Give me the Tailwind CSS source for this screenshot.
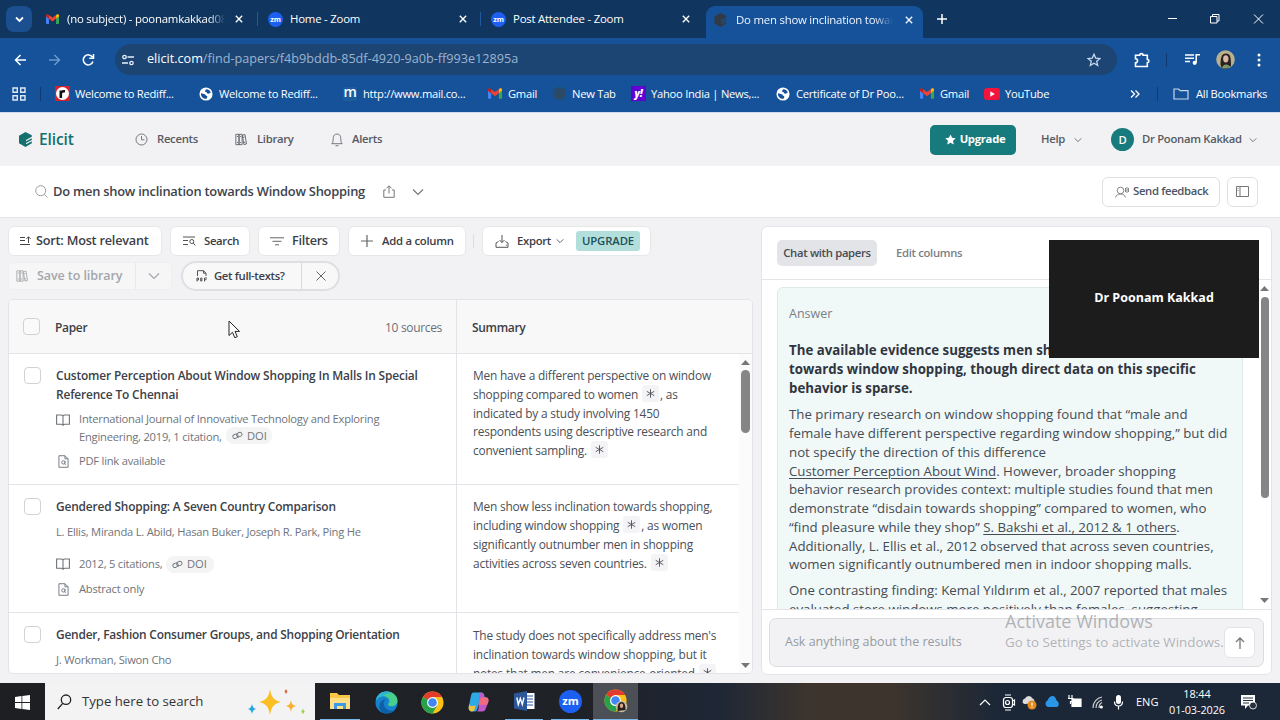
<!DOCTYPE html>
<html lang="en">
<head>
    <meta charset="UTF-8">
    <meta name="viewport" content="width=device-width, initial-scale=1.0">
    <title>Do men show inclination towards Window Shopping</title>
    <script src="https://cdn.jsdelivr.net/npm/@tailwindcss/browser@4"></script>
</head>
<body class="w-[1280px] h-[720px] overflow-hidden bg-[#f2f2f4] font-['Open_Sans','Noto_Sans',sans-serif] text-[#3b4048] whitespace-nowrap">

<!-- shared icons -->
<svg class="hidden">
    <symbol id="gmail" viewBox="0 0 16 12">
        <path d="M0 1.5V11a1 1 0 0 0 1 1h2.6V5z" fill="#4285f4"/>
        <path d="M16 1.5V11a1 1 0 0 1-1 1h-2.600V5z" fill="#34a853"/>
        <path d="M12.400 1.200V5.500L16 2.800V1.600C16 .2 14.400-.4 13.300.4z" fill="#fbbc04"/>
        <path d="M3.600 5.800V1L8 4.300 12.400 1v4.800L8 9z" fill="#ea4335"/>
        <path d="M0 1.600v1.400l3.600 2.800V1.200L2.700.4C1.600-.4 0 .2 0 1.600z" fill="#c5221f"/>
    </symbol>
    <symbol id="globe" viewBox="0 0 16 16">
        <circle cx="8" cy="8" r="7.500" fill="#fff"/>
        <path d="M8.500 2.500c2.500 0 4.500 2 5 4.200-1.500.5-2 1.300-3.500 1-1-.2-.8-1.700-2-1.900-1.300-.3-1.500-1-.8-1.800.6-.6.500-1 1.300-1.500zM2.300 7c1.700.3 3 .8 4.200 1.200 1.500.6 1 1.800 2.500 2.100 1 .3.500 1.800-.5 3.200C5 13.700 1.800 11 2.300 7z" fill="#15529a"/>
    </symbol>
    <symbol id="x" viewBox="0 0 10 10"><path d="M1 1l8 8M9 1l-8 8" fill="none" stroke="currentColor" stroke-width="1.700"/></symbol>
    <symbol id="chev" viewBox="0 0 12 8"><path d="M1 1.500l5 5 5-5" fill="none" stroke="currentColor" stroke-width="1.200"/></symbol>
    <symbol id="books" viewBox="0 0 14 14">
        <path d="M1 1h3.700v12H1zM4.700 1h3.600v12H4.700zM8.600 2l3-.8 1.800 11-3 .7zM2.200 3.500h1.300M6 3.500h1.200M2.200 10.500h1.300M6 10.500h1.200M9.400 4.500l1.700-.4M10.500 10.500l1.600-.4" fill="none" stroke="currentColor"/>
    </symbol>
    <symbol id="openbook" viewBox="0 0 14 12">
        <path d="M7 2v9M7 2C6.500 1.300 5.800 1 5 1H.6v9.300H5c.9 0 1.600.3 2 1 .4-.7 1.100-1 2-1h4.400V1H9c-.8 0-1.500.3-2 1z" fill="none" stroke="currentColor" stroke-width="1.100"/>
    </symbol>
    <symbol id="pdfdoc" viewBox="0 0 12 14">
        <path d="M1 .7h6.500L11 4v9.300H1zM7.500.7V4H11" fill="none" stroke="currentColor"/>
        <circle cx="5.800" cy="8" r="1.800" fill="none" stroke="currentColor"/><path d="M7.600 6v4.300h.8" fill="none" stroke="currentColor" stroke-width=".8"/>
    </symbol>
    <symbol id="link" viewBox="0 0 12 10">
        <rect x=".8" y="3.600" width="6" height="4.400" rx="2.200" transform="rotate(-25 3.800 5.800)" fill="none" stroke="currentColor"/>
        <rect x="5" y="1.800" width="6" height="4.400" rx="2.200" transform="rotate(-25 8 4)" fill="none" stroke="currentColor"/>
    </symbol>
    <symbol id="star6" viewBox="0 0 10 10"><path d="M5 .3v9.400M.8 2.600l8.400 4.800M9.200 2.600L.8 7.400" stroke="currentColor" fill="none"/></symbol>
    <symbol id="zm" viewBox="0 0 16 16">
        <circle cx="8" cy="8" r="8" fill="#1d5ff0"/>
        <text x="8" y="10.700" font-size="7.800" font-weight="700" text-anchor="middle" fill="#fff" font-family="Open Sans">zm</text>
    </symbol>
    <symbol id="elicit" viewBox="0 0 14 15">
        <path d="M7 0L13.300 3.300V4.800L7.500 8v1.300L13.300 6.300V8L7.500 11v1.200L13.300 9.300v2L7 15 .5 11.300V3.700z" fill="currentColor"/>
    </symbol>
    <symbol id="chrome" viewBox="0 0 24 24">
        <circle cx="12" cy="12" r="11.500" fill="#fbc116"/>
        <path d="M12 12L2.040 6.250A11.500 11.500 0 0 1 21.960 6.250H12z" fill="#e33b2e"/>
        <path d="M12 12L2.040 6.250A11.500 11.500 0 0 0 12 23.500L17 14.900z" fill="#27a24a"/>
        <circle cx="12" cy="12" r="5.700" fill="#fff"/><circle cx="12" cy="12" r="4.500" fill="#4285f4"/>
    </symbol>
</svg>

<!-- browser tabs -->
<div class="flex h-[38px] bg-[#10355e] text-white text-[11.400px] tracking-[-0.220px]">
    <div class="w-[38px] pt-[6px] pl-[6px]">
        <div class="w-[26px] h-[26px] rounded-[8px] bg-[#1b4f8f] flex items-center justify-center"><svg class="w-[9px] h-[7px]" viewBox="0 0 9 7"><path d="M1 1.500l3.500 3.500L8 1.500" fill="none" stroke="#fff" stroke-width="1.800"/></svg></div>
    </div>
    <div class="flex items-center w-[220px] pl-[8px] h-[38px]">
        <svg class="w-[13px] h-[10px] shrink-0"><use href="#gmail"/></svg>
        <span class="ml-[8px] w-[158px] overflow-hidden mask-r-from-90%">(no subject) - poonamkakkad08</span>
        <svg class="w-[8px] h-[8px] ml-[10px] shrink-0"><use href="#x"/></svg>
        <i class="w-px h-[14px] bg-[#24589a] ml-auto"></i>
    </div>
    <div class="flex items-center w-[223px] pl-[10px]">
        <svg class="w-[15px] h-[15px]"><use href="#zm"/></svg>
        <span class="ml-[7px] w-[169px]">Home - Zoom</span>
        <svg class="w-[8px] h-[8px] shrink-0"><use href="#x"/></svg>
        <i class="w-px h-[14px] bg-[#24589a] ml-auto"></i>
    </div>
    <div class="flex items-center w-[225px] pl-[10px]">
        <svg class="w-[15px] h-[15px]"><use href="#zm"/></svg>
        <span class="ml-[7px] w-[169px]">Post Attendee - Zoom</span>
        <svg class="w-[8px] h-[8px] shrink-0"><use href="#x"/></svg>
    </div>
    <div class="flex items-end">
        <div class="w-[217px] h-[32px] rounded-t-[9px] bg-[#15529a] flex items-center pl-[8px] pb-[5px] text-[#f0f5fc]">
            <svg class="w-[13px] h-[14px] text-[#333a45]"><use href="#elicit"/></svg>
            <span class="ml-[9px] w-[157px] overflow-hidden mask-r-from-88%">Do men show inclination towards</span>
            <svg class="w-[8px] h-[8px] ml-[12px]"><use href="#x"/></svg>
        </div>
    </div>
    <svg class="w-[10px] h-[10px] mt-[14px] ml-[14px]" viewBox="0 0 10 10"><path d="M5 0v10M0 5h10" stroke="#fff" stroke-width="1.500"/></svg>
    <svg class="w-[98px] h-[12px] mt-[13px] ml-[219px]" viewBox="0 0 98 12" fill="none" stroke="#fff">
        <path d="M2 5.500h9M88 1.500l9 9M97 1.500l-9 9"/><path d="M44.500 3.500h6.500v6.500h-6.500zM46.500 3.500v-2h6.500v6.500h-2"/>
    </svg>
</div>

<!-- address bar -->
<div class="flex items-center h-[43px] bg-[#15529a] text-white">
    <svg class="w-[82px] h-[14px] ml-[14px]" viewBox="0 0 82 14" fill="none" stroke="#fff" stroke-width="1.500">
        <path d="M12 7H2M6.500 2L1.500 7l5 5"/><path d="M35 7h10M40.500 2l5 5-5 5" stroke="#6c98cc"/>
        <path d="M78.500 4.200A5 5 0 1 0 79 8.500M79.500 1v4.200h-4.200"/>
    </svg>
    <div class="flex items-center ml-[19px] w-[1002px] h-[31px] rounded-full bg-[#1c4574] pl-[7px]">
        <svg class="w-[12px] h-[12px]" viewBox="0 0 12 12" fill="none" stroke="#e6eefa" stroke-width="1.300"><circle cx="2.500" cy="3" r="1.700"/><path d="M5.500 3H12M0 9h6"/><circle cx="9.500" cy="9" r="1.700"/></svg>
        <span class="ml-[13px] text-[12.630px] text-[#9db4d0]"><span class="text-white">elicit.com</span>/find-papers/f4b9bddb-85df-4920-9a0b-ff993e12895a</span>
        <svg class="w-[14px] h-[14px] ml-auto mr-[16px]" viewBox="0 0 14 14"><path d="M7 1.200l1.700 3.900 4.200.4-3.200 2.800 1 4.200L7 10.300l-3.700 2.200 1-4.200L1.100 5.500l4.200-.4z" fill="none" stroke="#c5d6ec" stroke-width="1.300"/></svg>
    </div>
    <svg class="w-[16px] h-[16px] ml-[17px]" viewBox="0 0 16 16"><path d="M1.500 3.300h4.200a1.700 1.700 0 0 1 3.400 0h4.200v4.200a1.600 1.600 0 0 1 0 3.200v3.800H1.500v-3.700a2 2 0 0 0 0-4z" fill="none" stroke="#fff" stroke-width="1.600"/></svg>
    <i class="w-px h-[14px] bg-[#0f3a74] ml-[16px]"></i>
    <svg class="w-[15px] h-[13px] ml-[18px]" viewBox="0 0 15 13"><path d="M0 2h9M0 5.200h9M0 8.400h5M11.200 9.500V1.700H15" fill="none" stroke="#fff" stroke-width="1.500"/><circle cx="9.700" cy="9.800" r="2.100" fill="#fff"/></svg>
    <svg class="w-[19px] h-[19px] ml-[16px]" viewBox="0 0 19 19"><circle cx="9.500" cy="9.500" r="9.300" fill="#b9b18e"/><path d="M4.500 15c0-7 1-11.500 5.500-11.500S15 8 15 16l-4 2.500H6z" fill="#2a211f"/><ellipse cx="9.800" cy="8.800" rx="2.700" ry="3.600" fill="#d9b8a8"/><path d="M6 18.500c.5-3 2-4 4-4s4 1.500 4.500 3z" fill="#7c9a6a"/></svg>
    <svg class="w-[4px] h-[14px] ml-[22px]" viewBox="0 0 4 14" fill="#fff"><circle cx="2" cy="2" r="1.500"/><circle cx="2" cy="7" r="1.500"/><circle cx="2" cy="12" r="1.500"/></svg>
</div>

<!-- bookmarks -->
<div class="flex items-center box-content h-[26px] pb-[5px] bg-[#15529a] text-white text-[11.200px] tracking-[-0.260px] pl-[12px] border-b border-[#cfdcef]">
    <svg class="w-[14px] h-[14px] shrink-0" viewBox="0 0 14 14"><path d="M1 1h4.300v4.300H1zM8.700 1H13v4.300H8.700zM1 8.700h4.300V13H1zM8.700 8.700H13V13H8.700z" fill="none" stroke="#dfe9f6" stroke-width="1.400"/></svg>
    <i class="w-px h-[14px] bg-[#0f3a74] ml-[14px] mr-[14px]"></i>
    <div class="flex items-center w-[144px] shrink-0">
        <svg class="w-[15px] h-[15px] mr-[5px]" viewBox="0 0 15 15"><rect width="15" height="15" fill="#d8202a"/><circle cx="7.500" cy="7.500" r="6.500" fill="#fff"/><path d="M5.800 12V4.500M5.800 7.500C6.300 5.500 7.500 5 10 5.300" stroke="#111" stroke-width="2.600" fill="none"/></svg>Welcome to Rediff...
    </div>
    <div class="flex items-center w-[144px] shrink-0"><svg class="w-[14px] h-[14px] mr-[6px]"><use href="#globe"/></svg>Welcome to Rediff...</div>
    <div class="flex items-center w-[145px] shrink-0"><span class="w-[14px] h-[14px] mr-[6px] text-[14px] leading-[9px] font-semibold bg-[#1a5c9e] flex justify-center">m</span>http://www.mail.co...</div>
    <div class="flex items-center w-[65px] shrink-0"><svg class="w-[14px] h-[11px] mr-[6px]"><use href="#gmail"/></svg>Gmail</div>
    <div class="flex items-center w-[78px] shrink-0"><i class="w-[13px] h-[13px] rounded-full bg-[#2b4a68] mr-[6px]"></i>New Tab</div>
    <div class="flex items-center w-[145px] shrink-0"><span class="w-[15px] h-[15px] mr-[5px] bg-[#6001d2] text-[10px] leading-[14px] font-extrabold italic text-center">y!</span>Yahoo India | News,...</div>
    <div class="flex items-center w-[144px] shrink-0"><svg class="w-[14px] h-[14px] mr-[6px]"><use href="#globe"/></svg>Certificate of Dr Poo...</div>
    <div class="flex items-center w-[64px] shrink-0"><svg class="w-[14px] h-[11px] mr-[6px]"><use href="#gmail"/></svg>Gmail</div>
    <div class="flex items-center w-[146px] shrink-0"><svg class="w-[16px] h-[12px] mr-[5px]" viewBox="0 0 16 12"><rect width="16" height="12" rx="3" fill="#f3143c"/><path d="M6.300 3.300v5.400L10.800 6z" fill="#fff"/></svg>YouTube</div>
    <svg class="w-[10px] h-[8px]" viewBox="0 0 10 8"><path d="M1 .5L4.500 4 1 7.500M5.500.5L9 4 5.500 7.500" fill="none" stroke="#fff" stroke-width="1.300"/></svg>
    <i class="w-px h-[14px] bg-[#0f3a74] ml-[17px] mr-[15px]"></i>
    <svg class="w-[16px] h-[12px] mr-[7px]" viewBox="0 0 16 12"><path d="M1 1h4.500l1.700 1.700H15V11H1z" fill="none" stroke="#c9d6e8" stroke-width="1.200"/></svg>All Bookmarks
</div>

<!-- app header -->
<header class="flex items-center h-[53px] text-[11.300px] tracking-[-0.300px] font-semibold text-[#565b63]">
    <svg class="w-[15px] h-[15px] ml-[18px] text-[#14706f]"><use href="#elicit"/></svg>
    <span class="ml-[6px] w-[96px] text-[15.500px] tracking-[-0.100px] font-semibold text-[#14706f]">Elicit</span>
    <svg class="w-[13px] h-[13px]" viewBox="0 0 13 13" fill="none" stroke="currentColor"><circle cx="6.500" cy="6.500" r="5.500" stroke-width=".8"/><path d="M6.500 3v3.800h3" stroke-width=".8"/></svg>
    <span class="ml-[9px] w-[78px]">Recents</span>
    <svg class="w-[12px] h-[13px]"><use href="#books"/></svg>
    <span class="ml-[10px] w-[74px]">Library</span>
    <svg class="w-[12px] h-[14px]" viewBox="0 0 12 14" fill="none" stroke="currentColor" stroke-width=".8"><path d="M.8 10.700h10.400C10 9.500 9.800 8 9.800 5.500 9.800 2.500 8.200 1 6 1S2.200 2.500 2.200 5.500C2.200 8 2 9.500.8 10.700zM4.500 12.700h3"/></svg>
    <span class="ml-[9px]">Alerts</span>
    <div class="ml-auto w-[86px] h-[30px] rounded-[5px] bg-[#177a7c] text-white font-bold flex items-center justify-center pl-[4px]">
        <svg class="w-[11px] h-[11px] mr-[4px]" viewBox="0 0 14 14"><path d="M7 .5l2 4.400 4.700.5-3.500 3.200 1 4.800L7 11l-4.200 2.400 1-4.800L.3 5.400 5 4.900z" fill="#fff"/></svg>Upgrade
    </div>
    <span class="ml-[25px] w-[33px]">Help</span>
    <svg class="w-[8px] h-[6px]"><use href="#chev"/></svg>
    <span class="ml-[29px] w-[23px] h-[23px] rounded-full bg-[#177a7c] text-white text-center leading-[23px]">D</span>
    <span class="ml-[8px] w-[107px]">Dr Poonam Kakkad</span>
    <svg class="w-[8px] h-[6px] mr-[23px]"><use href="#chev"/></svg>
</header>

<!-- question title -->
<div class="flex items-center h-[52px] bg-white border-b border-[#e3e4e7] text-[#4b5563]">
    <svg class="w-[13px] h-[13px] ml-[35px]" viewBox="0 0 13 13" fill="none" stroke="#9a9da3"><circle cx="5.700" cy="5.700" r="5"/><path d="M9.300 9.300l3.200 3.200"/></svg>
    <h1 class="ml-[5px] w-[330px] text-[12.900px] tracking-[-0.240px] font-semibold text-[#3d434c]">Do men show inclination towards Window Shopping</h1>
    <svg class="w-[12px] h-[13px]" viewBox="0 0 12 13" fill="none" stroke="#777"><path d="M3 5H.8v7.300h10.400V5H9M6 8.500V1M3.500 3.300L6 .8l2.500 2.500"/></svg>
    <svg class="w-[12px] h-[8px] ml-[17px] text-[#777]"><use href="#chev"/></svg>
    <div class="ml-auto w-[118px] h-[30px] rounded-[6px] border border-[#dfe0e3] flex items-center pl-[12px] text-[11.300px] tracking-[-0.330px] font-semibold">
        <svg class="w-[14px] h-[12px] mr-[4px]" viewBox="0 0 14 12" fill="none" stroke="#777" stroke-width=".9"><circle cx="5.500" cy="4.500" r="3.300"/><path d="M.6 11.500C1 9 3 8 5.500 8s4.500 1 4.900 3.500M10.500 2v4M12 1v6M13.500 2v4"/></svg>Send feedback
    </div>
    <div class="ml-[7px] mr-[22px] w-[31px] h-[30px] rounded-[6px] border border-[#dfe0e3] flex items-center justify-center">
        <svg class="w-[13px] h-[11px]" viewBox="0 0 13 11" fill="none" stroke="#777"><path d="M.5.500h12v10H.5zM4 .5v10M1.500 2.500h1M1.500 4.500h1"/></svg>
    </div>
</div>

<main class="flex h-[465px] pt-[8px] pl-[8px] pr-[8px] pb-[8px]">
    <!-- papers -->
    <section class="w-[745px] flex flex-col">
        <div class="flex h-[30px] text-[11.300px] tracking-[-0.300px] font-semibold">
            <div class="w-[154px] rounded-[6px] border border-[#e6e7e9] bg-white flex items-center pl-[11px] text-[12.700px] tracking-[-0.220px]">
                <svg class="w-[11px] h-[10px] mr-[5px]" viewBox="0 0 11 10" fill="none" stroke="#444"><path d="M0 1.500h5M0 4.500h5M0 8.500h10M8.500 7V.8M6.500 2.800l2-2 2 2"/></svg>Sort: Most relevant
            </div>
            <div class="ml-[8px] w-[80px] rounded-[6px] border border-[#e6e7e9] bg-white flex items-center pl-[12px]">
                <svg class="w-[13px] h-[10px] mr-[8px]" viewBox="0 0 13 10" fill="none" stroke="#555"><path d="M0 1h12M0 4.500h5M0 8.500h5"/><circle cx="8.800" cy="5.500" r="2"/><path d="M10.300 7l2 2.500"/></svg>Search
            </div>
            <div class="ml-[8px] w-[82px] rounded-[6px] border border-[#e6e7e9] bg-white flex items-center pl-[11px] text-[12.700px]">
                <svg class="w-[14px] h-[9px] mr-[8px]" viewBox="0 0 14 9" fill="none" stroke="#666"><path d="M0 .8h14M2.500 4.300h9M5 7.800h4"/></svg>Filters
            </div>
            <div class="ml-[8px] w-[118px] rounded-[6px] border border-[#e6e7e9] bg-white flex items-center pl-[12px] tracking-[-0.260px]">
                <svg class="w-[12px] h-[12px] mr-[9px]" viewBox="0 0 12 12"><path d="M6 0v12M0 6h12" stroke="#666" stroke-width="1.200"/></svg>Add a column
            </div>
            <i class="w-px h-[14px] mt-[8px] bg-[#dddee2] ml-[7px]"></i>
            <div class="ml-[8px] w-[169px] rounded-[6px] border border-[#e6e7e9] bg-white flex items-center pl-[12px]">
                <svg class="w-[14px] h-[13px] mr-[8px]" viewBox="0 0 14 13" fill="none" stroke="#555"><path d="M7 0v7.500M4.500 5L7 7.500 9.500 5M3.500 6.500L1 8v4.300h12V8l-2.500-1.500M11 10.300h.9"/></svg>
                <span class="w-[39px]">Export</span>
                <svg class="w-[8px] h-[6px]"><use href="#chev"/></svg>
                <span class="ml-[12px] w-[64px] h-[20px] rounded-[3px] bg-[#b2dfdc] text-[#1d4f57] text-center leading-[20px] tracking-[-0.100px]">UPGRADE</span>
            </div>
        </div>
        <div class="flex h-[30px] mt-[5px]">
            <div class="w-[164px] h-[28px] mt-px rounded-[4px] bg-[#f6f6f7] border border-[#eeeff1] flex items-center pl-[7px] text-[12.500px] tracking-[-0.080px] font-semibold text-[#a3a6ab]">
                <svg class="w-[12px] h-[12px] mr-[9px]"><use href="#books"/></svg>
                <span class="w-[98px]">Save to library</span>
                <i class="w-px h-full bg-[#e8e9eb]"></i>
                <svg class="w-[12px] h-[8px] ml-[12px]"><use href="#chev"/></svg>
            </div>
            <div class="ml-[9px] w-[159px] rounded-full border-2 border-[#dedfe2] bg-[#f8f8f9] flex items-center pl-[13px] text-[11.300px] tracking-[-0.330px] font-semibold">
                <svg class="w-[12px] h-[12px] mr-[6px]" viewBox="0 0 12 12" fill="none" stroke="#555"><path d="M1.500 6V.7h6L10 3.200V6M7.500.7v2.500H10M1 11.500V8h1.500v2H1M4.700 8v3h1.200V8zM8.500 11.500V8H11M8.500 9.700h2"/></svg>
                <span class="w-[87px]">Get full-texts?</span>
                <i class="w-px h-full bg-[#d9dadd]"></i>
                <svg class="w-[10px] h-[10px] ml-[14px]" viewBox="0 0 10 10"><path d="M.5.500l9 9M9.500.500l-9 9" stroke="#666"/></svg>
            </div>
        </div>

        <div class="mt-[8px] h-[375px] shrink-0 rounded-[5px] border border-[#e3e4e7] bg-white overflow-hidden">
            <div class="flex h-[54px] bg-[#f8f8f9] border-b-[1.500px] border-[#e3e4e7] text-[12px] tracking-[-0.330px]">
                <div class="w-[448px] border-r border-[#e3e4e7] flex items-center">
                    <i class="ml-[14px] w-[17px] h-[17px] rounded-[4px] border border-[#d0d2d6] bg-[#fafafa]"></i>
                    <span class="ml-[15px] pt-[2px] font-semibold">Paper</span>
                    <span class="ml-auto mr-[14px] pt-[2px] text-[#6b7078]">10 sources</span>
                </div>
                <span class="ml-[15px] leading-[56px] font-semibold">Summary</span>
            </div>
            <div class="flex h-[320px]">
                <div class="w-[730px] h-[320px] overflow-hidden text-[11.900px] tracking-[-0.190px] text-[#4b4f57]">
                    <div class="flex h-[131px] border-b border-[#e3e4e7]">
                        <div class="w-[448px] border-r border-[#e3e4e7] flex">
                            <i class="ml-[15px] mt-[13px] w-[17px] h-[17px] rounded-[4px] border border-[#d0d2d6]"></i>
                            <div class="ml-[15px] pt-[12px] text-[#6f747b] text-[11.200px] tracking-[-0.240px]">
                                <h2 class="text-[11.900px] tracking-[-0.150px] leading-[19px] font-semibold text-[#3b4048]">Customer Perception About Window Shopping In Malls In Special<br>Reference To Chennai</h2>
                                <div class="flex mt-[6px] leading-[18px]">
                                    <svg class="w-[14px] h-[12px] mt-[4px] mr-[9px]"><use href="#openbook"/></svg>
                                    <div>International Journal of Innovative Technology and Exploring<br>
                                        <div class="flex h-[18px]"><span class="w-[147px]">Engineering, 2019, 1 citation,</span><span class="w-[46px] h-[17px] -mt-px rounded-[8px] bg-[#f4f4f5] flex items-center pl-[6px] tracking-normal"><svg class="w-[11px] h-[9px] mr-[4px]"><use href="#link"/></svg>DOI</span></div>
                                    </div>
                                </div>
                                <div class="flex items-center mt-[6px] leading-[18px]"><svg class="w-[11px] h-[13px] ml-[2px] mr-[10px]"><use href="#pdfdoc"/></svg>PDF link available</div>
                            </div>
                        </div>
                        <div class="pl-[16px] pt-[12px] leading-[18.800px]">
                            <p>Men have a different perspective on window</p>
                            <p class="flex">shopping compared to women<span class="ml-[4px] mr-px w-[17px] h-[17px] rounded-[3px] bg-[#f4f4f6] flex items-center justify-center"><svg class="w-[9px] h-[9px]"><use href="#star6"/></svg></span>, as</p>
                            <p>indicated by a study involving 1450</p>
                            <p>respondents using descriptive research and</p>
                            <p class="flex">convenient sampling.<span class="ml-[4px] w-[17px] h-[17px] rounded-[3px] bg-[#f4f4f6] flex items-center justify-center"><svg class="w-[9px] h-[9px]"><use href="#star6"/></svg></span></p>
                        </div>
                    </div>
                    <div class="flex h-[128px] border-b border-[#e3e4e7]">
                        <div class="w-[448px] border-r border-[#e3e4e7] flex">
                            <i class="ml-[15px] mt-[13px] w-[17px] h-[17px] rounded-[4px] border border-[#d0d2d6]"></i>
                            <div class="ml-[15px] pt-[12px] text-[#6f747b] text-[11.200px] tracking-[-0.240px] leading-[18px]">
                                <h2 class="text-[11.900px] tracking-[-0.150px] leading-[19px] font-semibold text-[#3b4048]">Gendered Shopping: A Seven Country Comparison</h2>
                                <p class="mt-[7px]">L. Ellis, Miranda L. Abild, Hasan Buker, Joseph R. Park, Ping He</p>
                                <div class="flex items-center mt-[14px]">
                                    <svg class="w-[14px] h-[12px] mr-[9px]"><use href="#openbook"/></svg>
                                    <span class="w-[87px]">2012, 5 citations,</span><span class="w-[48px] h-[17px] rounded-[8px] bg-[#f4f4f5] flex items-center pl-[6px] tracking-normal"><svg class="w-[11px] h-[9px] mr-[4px]"><use href="#link"/></svg>DOI</span>
                                </div>
                                <div class="flex items-center mt-[7px]"><svg class="w-[11px] h-[13px] ml-[2px] mr-[10px]"><use href="#pdfdoc"/></svg>Abstract only</div>
                            </div>
                        </div>
                        <div class="pl-[16px] pt-[12px] leading-[19px]">
                            <p>Men show less inclination towards shopping,</p>
                            <p class="flex">including window shopping<span class="ml-[4px] mr-px w-[17px] h-[17px] rounded-[3px] bg-[#f4f4f6] flex items-center justify-center"><svg class="w-[9px] h-[9px]"><use href="#star6"/></svg></span>, as women</p>
                            <p>significantly outnumber men in shopping</p>
                            <p class="flex">activities across seven countries.<span class="ml-[4px] w-[17px] h-[17px] rounded-[3px] bg-[#f4f4f6] flex items-center justify-center"><svg class="w-[9px] h-[9px]"><use href="#star6"/></svg></span></p>
                        </div>
                    </div>
                    <div class="flex h-[128px]">
                        <div class="w-[448px] border-r border-[#e3e4e7] flex">
                            <i class="ml-[15px] mt-[13px] w-[17px] h-[17px] rounded-[4px] border border-[#d0d2d6]"></i>
                            <div class="ml-[15px] pt-[12px] text-[#6f747b] text-[11.200px] tracking-[-0.240px] leading-[18px]">
                                <h2 class="text-[11.900px] tracking-[-0.200px] leading-[19px] font-semibold text-[#3b4048]">Gender, Fashion Consumer Groups, and Shopping Orientation</h2>
                                <p class="mt-[7px]">J. Workman, Siwon Cho</p>
                            </div>
                        </div>
                        <div class="pl-[16px] pt-[13px] leading-[18.800px]">
                            <p>The study does not specifically address men's</p>
                            <p>inclination towards window shopping, but it</p>
                            <p class="flex">notes that men are convenience-oriented<span class="ml-[4px] w-[17px] h-[17px] rounded-[3px] bg-[#f4f4f6] flex items-center justify-center"><svg class="w-[9px] h-[9px]"><use href="#star6"/></svg></span></p>
                        </div>
                    </div>
                </div>
                <div class="w-[13px] bg-[#fbfbfb] flex flex-col items-center pt-[6px]">
                    <svg class="w-[9px] h-[5px]" viewBox="0 0 9 5"><path d="M0 5l4.500-5L9 5z" fill="#777"/></svg>
                    <i class="mt-[5px] w-[9px] h-[63px] rounded-full bg-[#858585]"></i>
                    <svg class="w-[9px] h-[5px] mt-auto mb-[6px]" viewBox="0 0 9 5"><path d="M0 0l4.500 5L9 0z" fill="#777"/></svg>
                </div>
            </div>
        </div>
    </section>

    <!-- chat -->
    <aside class="ml-[8px] w-[511px] h-[449px] shrink-0 rounded-[6px] border border-[#e3e4e7] bg-white flex flex-col">
        <div class="h-[53px] shrink-0 border-b border-[#e3e4e7] flex items-center text-[11.300px] tracking-[-0.330px] font-semibold text-[#474c54]">
            <span class="ml-[15px] w-[100px] h-[26px] rounded-[5px] bg-[#e3e4e7] text-center leading-[26px]">Chat with papers</span>
            <span class="ml-[19px] text-[#7a7f86]">Edit columns</span>
        </div>
        <div class="flex h-[329px] shrink-0 overflow-hidden">
            <div class="ml-[15px] mt-[7px] w-[466px] h-[400px] shrink-0 rounded-[6px] border border-[#deebea] bg-[#f0f8f8] pl-[11px] pt-[16px] text-[13.280px] leading-[18.750px] text-[#454c55]">
                <div class="text-[12.500px] leading-[20px] text-[#7a7f86]">Answer</div>
                <div class="mt-[17px] font-bold text-[13.280px] text-[#30363f]">
                    <p>The available evidence suggests men show less inclination</p>
                    <p>towards window shopping, though direct data on this specific</p>
                    <p>behavior is sparse.</p>
                </div>
                <div class="mt-[8px]">
                    <p>The primary research on window shopping found that “male and</p>
                    <p>female have different perspective regarding window shopping,” but did</p>
                    <p>not specify the direction of this difference</p>
                    <p><span class="underline underline-offset-2">Customer Perception About Wind</span>. However, broader shopping</p>
                    <p>behavior research provides context: multiple studies found that men</p>
                    <p>demonstrate “disdain towards shopping” compared to women, who</p>
                    <p>“find pleasure while they shop” <span class="underline underline-offset-2">S. Bakshi et al., 2012 &amp; 1 others</span>.</p>
                    <p>Additionally, L. Ellis et al., 2012 observed that across seven countries,</p>
                    <p>women significantly outnumbered men in indoor shopping malls.</p>
                </div>
                <div class="mt-[7px]">
                    <p>One contrasting finding: Kemal Yıldırım et al., 2007 reported that males</p>
                    <p>evaluated store windows more positively than females, suggesting</p>
                </div>
            </div>
            <div class="ml-auto w-[13px] flex flex-col items-center pt-[6px]">
                <svg class="w-[9px] h-[5px]" viewBox="0 0 9 5"><path d="M0 5l4.500-5L9 5z" fill="#777"/></svg>
                <i class="mt-[6px] w-[8px] h-[201px] rounded-full bg-[#858585]"></i>
                <svg class="w-[9px] h-[5px] mt-auto mb-[6px]" viewBox="0 0 9 5"><path d="M0 0l4.500 5L9 0z" fill="#777"/></svg>
            </div>
        </div>
        <div class="flex-1 border-t border-[#e3e4e7] pl-[7px] pt-[8px]">
            <div class="w-[495px] h-[49px] rounded-[7px] border-[1.500px] border-[#dcdde0] bg-[#f2f2f4] flex items-center pl-[15px] pr-[8px] text-[12.500px] text-[#969ba2]">
                Ask anything about the results
                <span class="ml-auto w-[31px] h-[31px] rounded-[6px] border border-[#e3e4e7] bg-white flex items-center justify-center"><svg class="w-[10px] h-[12px]" viewBox="0 0 10 12" fill="none" stroke="#777" stroke-width="1.300"><path d="M5 12V1M1 5l4-4 4 4"/></svg></span>
            </div>
        </div>
    </aside>
</main>

<!-- taskbar -->
<footer class="flex h-[38px] bg-[linear-gradient(90deg,#1e1f22_0,#1f2227_45%,#1e2736_56%,#3c342d_63%,#3c342d_70%,#1b2737_78%,#1c2838_100%)] text-white">
    <div class="w-[45px] flex items-center justify-center"><svg class="w-[15px] h-[15px]" viewBox="0 0 15 15"><path d="M0 2l6.500-1v6H0zM7.300.9L15 0v7H7.300zM0 8h6.500v6L0 13zM7.300 8H15v7l-7.700-1z" fill="#fff"/></svg></div>
    <div class="w-[270px] bg-[#f3f3f3] flex items-center pl-[12px] text-[13.200px] text-[#333]">
        <svg class="w-[15px] h-[16px] mr-[10px]" viewBox="0 0 15 16" fill="none" stroke="#222" stroke-width="1.300"><circle cx="9" cy="5.700" r="4.700"/><path d="M5.700 9.300L.8 15"/></svg>
        <span>Type here to search</span>
        <svg class="w-[58px] h-[26px] ml-auto mr-[9px]" viewBox="0 0 58 26"><path d="M22 0c1.500 8 3 11 11 13-8 2-9.500 5-11 13-1.500-8-3-11-11-13 8-2 9.500-5 11-13z" fill="#fbbf24"/><path d="M43 11c.7 4 1.500 5 5 6-3.500 1-4.300 2-5 6-.7-4-1.500-5-5-6 3.500-1 4.300-2 5-6z" fill="#f9ae2b"/><path d="M4 15c.6 2.500 1 4 4 5-3 1-3.500 2.500-4 5-.6-2.500-1-4-4-5 3-1 3.400-2.500 4-5z" fill="#22a7e0"/><path d="M38 0l1.500 2.500L38 5l-1.500-2.500z" fill="#e0663c"/><path d="M55 20l1.700 2.500L55 25l-1.700-2.500z" fill="#9bd14b"/></svg>
    </div>
    <div class="flex items-center [&>div]:flex [&>div]:items-center [&>div]:justify-center [&>div]:h-[38px]">
        <div class="ml-[5px] w-[40px] border-b-2 border-[#76b9ed]"><svg class="w-[22px] h-[20px]" viewBox="0 0 22 20"><path d="M1 2h7l2 2h11v14H1z" fill="#f7c748"/><path d="M1 7h20v11H1z" fill="#ffdf85"/><path d="M5 12h12v6h-3v-3H8v3H5z" fill="#3c9be8"/></svg></div>
        <div class="ml-[5px] w-[42px]"><svg class="w-[23px] h-[23px]" viewBox="0 0 24 24"><circle cx="12" cy="12" r="11.500" fill="#1683cf"/><path d="M1 10C2 3.500 7 .5 12 .5c7 0 11.500 5 11.500 9.500 0 4-3 6-6 6s-4-1.200-4-2c0-1 1.500-1 1.500-3.500C15 8 12 5.500 8.500 5.500S2 8 1 10z" fill="#47cf8d"/><path d="M1 10C2 3.500 7 .5 12 .5c2 0 4 .5 5.500 1.300C12 3 9 4 8.500 5.500 5 5.500 2 8 1 10z" fill="#2fb5d8"/><path d="M9 12c0 5 4 9 9 8.500 2-.2 3-1 3.500-1.500-2 3-5.500 4.500-9 4.500C6 23.500 3 18 5 13c1-3 4-5 7-4-2 .5-3 1.500-3 3z" fill="#0f5fa6"/></svg></div>
        <div class="ml-[4px] w-[42px]"><svg class="w-[23px] h-[23px]"><use href="#chrome"/></svg></div>
        <div class="ml-[4px] w-[42px]"><svg class="w-[21px] h-[20px]" viewBox="0 0 22 20"><path d="M6 0h8c2 0 2.500 1 3 3l.5 2h-4l-4 13c-.5 1.500-1.500 2-3 2H5c-3 0-5-2-4-6L3 4C3.600 1.500 4 0 6 0z" fill="#2fa8e6"/><path d="M1 12c1 3 4 2 7 2l-1.500 5c-3 2-7 1-5.500-5z" fill="#f3c13a"/><path d="M12 0c3 0 4 1 4.500 3l.5 2h1c3 0 4 2 3.300 5L19 16c-1 3-2 4-4 4H8c2 0 2.500-1 3-3z" fill="#c158c9"/><path d="M13.500 5H18c3 0 4 2 3.300 5L20 13h-9z" fill="#f06b7e"/></svg></div>
        <div class="ml-[6px] w-[38px] border-b-2 border-[#76b9ed]"><svg class="w-[21px] h-[20px]" viewBox="0 0 21 20"><path d="M10 2h10.500v16H10z" fill="#fff"/><path d="M12 5h7M12 8h7M12 11h7M12 14h7" stroke="#2b579a" stroke-width="1.200"/><path d="M0 2.500L13 0v20L0 17.500z" fill="#2b579a"/><path d="M2.800 6.500l1.500 7 2-6 2 6 1.700-7" fill="none" stroke="#fff" stroke-width="1.400"/></svg></div>
        <div class="ml-[8px] w-[38px] border-b-2 border-[#76b9ed]"><svg class="w-[23px] h-[23px]"><use href="#zm"/></svg></div>
        <div class="ml-[4px] w-[45px] bg-[#4c5056] border-b-2 border-[#76b9ed]"><svg class="w-[24px] h-[24px]" viewBox="0 0 24 24"><g transform="scale(.96)"><use href="#chrome" width="24" height="24"/></g><circle cx="17.500" cy="17.500" r="5.800" fill="#c9bda0"/><path d="M13.500 22c0-5 .5-9 4-9s4 4 4 8z" fill="#2a211f"/><ellipse cx="17.500" cy="16.800" rx="1.700" ry="2.300" fill="#d9a98c"/></svg></div>
    </div>
    <div class="ml-auto flex items-center">
        <svg class="w-[145px] h-[18px]" viewBox="0 0 145 18" fill="none" stroke="#fff" stroke-width="1.200">
            <path d="M1 12l5-5 5 5"/>
            <rect x="24.500" y="4.500" width="9" height="10" rx="2.500"/><circle cx="28.500" cy="9.500" r="2"/><path d="M33.500 8l2-1v5l-2-1M26 2h6M26 17h6"/>
            <path d="M45 11a3 3 0 0 1 1-5.500 4 4 0 0 1 7.500 0c2 .5 2.500 3 1 5z" fill="#ddd" stroke="none"/><circle cx="53" cy="12" r="4.500" fill="#e48a1c" stroke="none"/><path d="M53 9.500v3M53 13.500v1"/>
            <path d="M69 14a3.500 3.500 0 0 1-.5-6.500C69.500 4.500 71.500 3 73.500 3s3.500 2 4 4.500c2.500.5 3.500 6.500 0 6.500z" fill="#2b95e8" stroke="none"/>
            <path d="M93 6h9v7.500h-9z" fill="#fff"/><path d="M90 2v4M93 2v3M89 5.500h5v3h-2.500V11"/>
            <path d="M114 15c0-6 4-10 9-11M117 15c0-4.500 2.500-7 6-8M120 15c0-3 1-4.500 3-5.500" stroke="#ccc"/><circle cx="122.300" cy="14" r="1" fill="#fff"/>
            <rect x="137" y="2" width="5" height="9" rx="2.500" fill="#fff" stroke="none"/><path d="M135.500 8.500c0 6 8 6 8 0M139.500 13v3.500"/>
        </svg>
        <span class="ml-[12px] w-[32px] text-[11px]">ENG</span>
        <div class="w-[58px] text-[10.900px] tracking-[-0.100px] leading-[16px] text-center">18:44<br>01-03-2026</div>
        <svg class="w-[17px] h-[16px] ml-[14px] mr-[23px]" viewBox="0 0 17 16"><path d="M1 1h14v10.500H8L5 15v-3.500H1z" fill="#fff"/><path d="M3 4h10M3 6.500h10M3 9h6" stroke="#26303f"/><circle cx="13" cy="11.500" r="3.500" fill="#26303f" stroke="#fff" stroke-width=".8"/></svg>
    </div>
</footer>

<!-- meeting video tile -->
<div class="absolute left-[1049px] top-[240px] w-[210px] h-[118px] bg-[#1c1c1c] text-white text-[12.500px] font-bold flex items-center justify-center pb-[2px]">Dr Poonam Kakkad</div>

<!-- activation watermark -->
<div class="absolute left-[1005px] top-[609px] text-[#9a9da2]/75">
    <div class="text-[18px] leading-[24px]">Activate Windows</div>
    <div class="text-[13.350px] leading-[18px]">Go to Settings to activate Windows.</div>
</div>

<!-- pointer -->
<svg class="absolute left-[228px] top-[320px] w-[13px] h-[19px]" viewBox="0 0 13 19"><path d="M1 1v14.500l3.500-3.200 2.300 5.400 2.500-1-2.300-5.300h4.500z" fill="#fff" stroke="#222"/></svg>
</body>
</html>
